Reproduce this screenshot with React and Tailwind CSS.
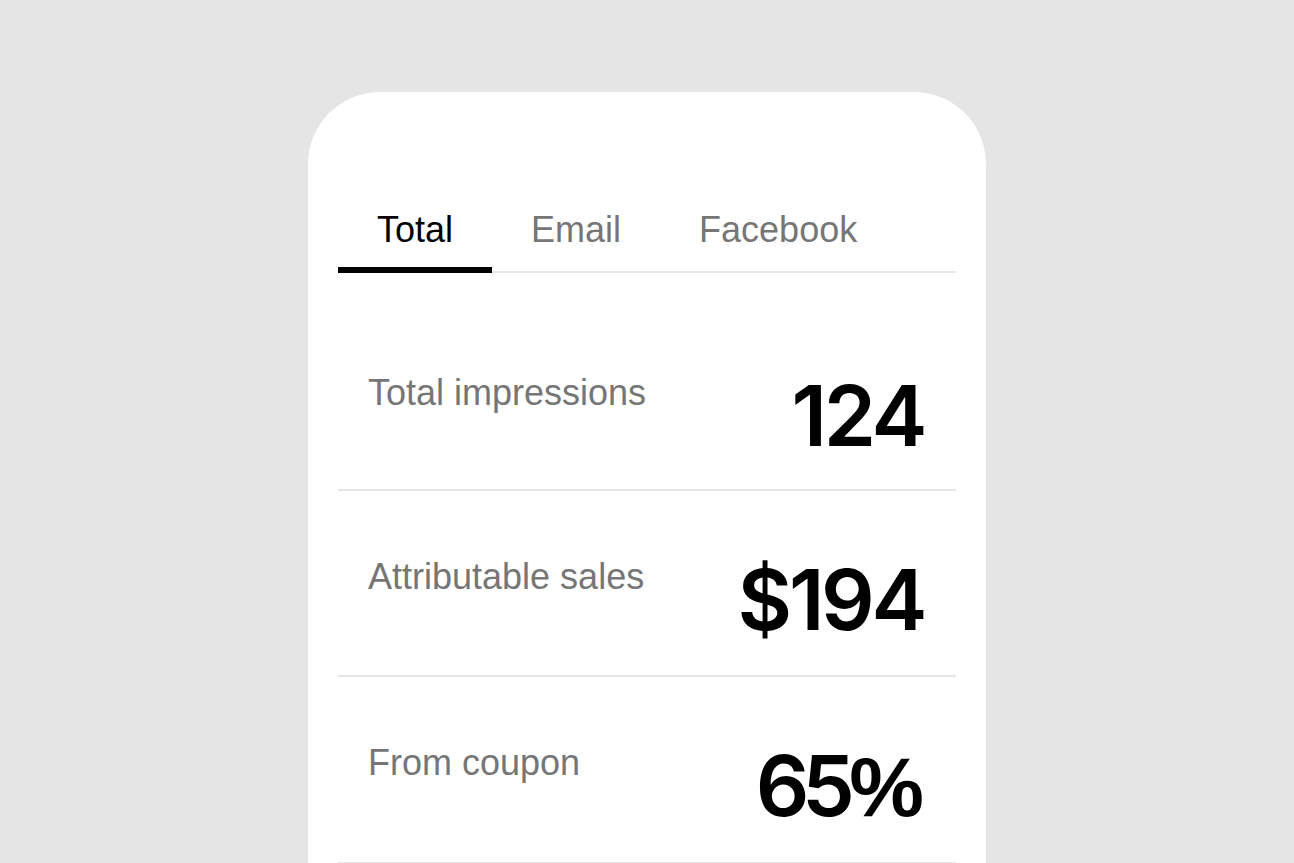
const TABS = ['Total', 'Email', 'Facebook']

const STATS = [
  { label: 'Total impressions', value: '124', pt: 'pt-[101px]', pb: 'pb-[31px]', track: 'tracking-[-0.04em]' },
  { label: 'Attributable sales', value: '$194', pt: 'pt-[67px]', pb: 'pb-[33px]', track: 'tracking-[-0.04em]' },
  { label: 'From coupon', value: '65', unit: '%', pt: 'pt-[67px]', pb: 'pb-[33px]', track: 'tracking-[-0.09em]' },
]

// Stats card with a tab strip over it — the card runs past the bottom of the frame.
export default function App() {
  const active = 'Total'

  return (
    <div className="h-[863px] overflow-hidden bg-[#e5e5e5] font-['Liberation_Sans',Arial,sans-serif]">
      <div className="flex justify-center pt-[92px]">
        <div className="w-[678px] bg-white rounded-t-[72px] px-[30px] pt-[120px] pb-[120px]">
          <nav className="flex border-b-2 border-[#e6e6e6]">
            {TABS.map((tab) => (
              <button
                key={tab}
                type="button"
                className={`-mb-[2px] px-[39px] pb-[19px] text-[36px] leading-none border-b-[6px] ${
                  tab === active ? 'text-black border-black' : 'text-[#767676] border-transparent'
                }`}
              >
                {tab}
              </button>
            ))}
          </nav>

          {STATS.map((s) => (
            <div
              key={s.label}
              className={`flex items-start justify-between border-b-2 border-[#e6e6e6] pl-[30px] pr-[32px] ${s.pt} ${s.pb}`}
            >
              <span className="mt-[1px] text-[36px] leading-none text-[#767676]">{s.label}</span>
              <span className={`font-['Inter',sans-serif] text-[84px] leading-none font-semibold text-black ${s.track}`}>
                {s.value}
                {s.unit && (
                  <span className="ml-[2px] font-['Liberation_Sans',Arial,sans-serif] font-bold tracking-normal">{s.unit}</span>
                )}
              </span>
            </div>
          ))}
        </div>
      </div>
    </div>
  )
}
